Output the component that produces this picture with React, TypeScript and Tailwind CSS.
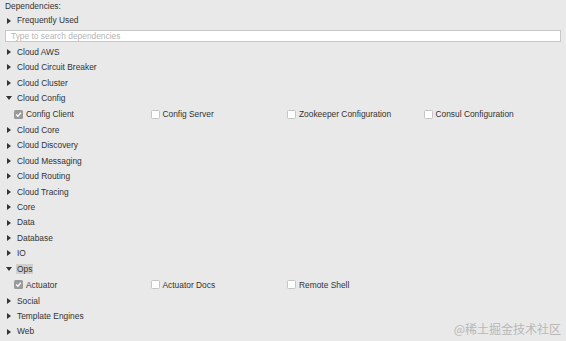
import React from "react";

const Arrow = ({ open }: { open?: boolean }) => (
  <svg width="6" height="6" viewBox="0 0 6 6" className="shrink-0">
    {open ? <polygon points="0,1 6,1 3,5" fill="#333" /> : <polygon points="1,0 5,3 1,6" fill="#333" />}
  </svg>
);

const Check = ({ checked, label }: { checked?: boolean; label: string }) => (
  <div className="flex items-center w-[136.5px]">
    {checked ? (
      <div className="w-[9px] h-[9px] rounded-[1.5px] bg-[#9a9a9a] flex items-center justify-center">
        <svg width="7" height="7" viewBox="0 0 6 6">
          <polyline points="1,3 2.5,4.5 5,1.5" fill="none" stroke="#fff" strokeWidth="1.1" />
        </svg>
      </div>
    ) : (
      <div className="w-[9px] h-[9px] rounded-[1.5px] bg-white border border-[#c4c4c4]" />
    )}
    <span className="ml-[3px]">{label}</span>
  </div>
);

const Row = ({ label, open }: { label: string; open?: boolean }) => (
  <div className="h-[15.4px] flex items-center pl-[6px]">
    <Arrow open={open} />
    {label === "Ops" ? (
      <span className="ml-[4px] bg-[#cfcfcf] px-[1px] py-[1px]">{label}</span>
    ) : (
      <span className="ml-[5px]">{label}</span>
    )}
  </div>
);

const CheckRow = ({ items }: { items: { label: string; checked?: boolean }[] }) => (
  <div className="h-[16.6px] flex items-center pl-[14px]">
    {items.map((i) => (
      <Check key={i.label} {...i} />
    ))}
  </div>
);

export default function App() {
  return (
    <div
      className="relative w-[566px] h-[341px] bg-[#e9e9e9] text-[#333333] text-[8.4px] leading-none overflow-hidden"
      style={{ fontFamily: '"Liberation Sans", Arial, sans-serif' }}
    >
      <div className="pt-[1px] pl-[5px] h-[12px] flex items-center">Dependencies:</div>
      <div className="h-[1px]" />
      <Row label="Frequently Used" />
      <div className="h-[16px] flex items-center px-[5px]">
        <div className="w-full h-[12px] bg-white border border-[#c8c8c8] flex items-center pl-[5px] text-[#b5b5b5]">
          Type to search dependencies
        </div>
      </div>
      <Row label="Cloud AWS" />
      <Row label="Cloud Circuit Breaker" />
      <Row label="Cloud Cluster" />
      <Row label="Cloud Config" open />
      <CheckRow
        items={[
          { label: "Config Client", checked: true },
          { label: "Config Server" },
          { label: "Zookeeper Configuration" },
          { label: "Consul Configuration" },
        ]}
      />
      <Row label="Cloud Core" />
      <Row label="Cloud Discovery" />
      <Row label="Cloud Messaging" />
      <Row label="Cloud Routing" />
      <Row label="Cloud Tracing" />
      <Row label="Core" />
      <Row label="Data" />
      <Row label="Database" />
      <Row label="IO" />
      <Row label="Ops" open />
      <CheckRow
        items={[
          { label: "Actuator", checked: true },
          { label: "Actuator Docs" },
          { label: "Remote Shell" },
        ]}
      />
      <Row label="Social" />
      <Row label="Template Engines" />
      <Row label="Web" />
      <div
        className="absolute right-[5px] bottom-[6px] text-[12px] leading-none text-[#b8b8b8]"
        style={{ fontFamily: '"Noto Sans CJK SC", sans-serif' }}
      >
        @稀土掘金技术社区
      </div>
    </div>
  );
}
